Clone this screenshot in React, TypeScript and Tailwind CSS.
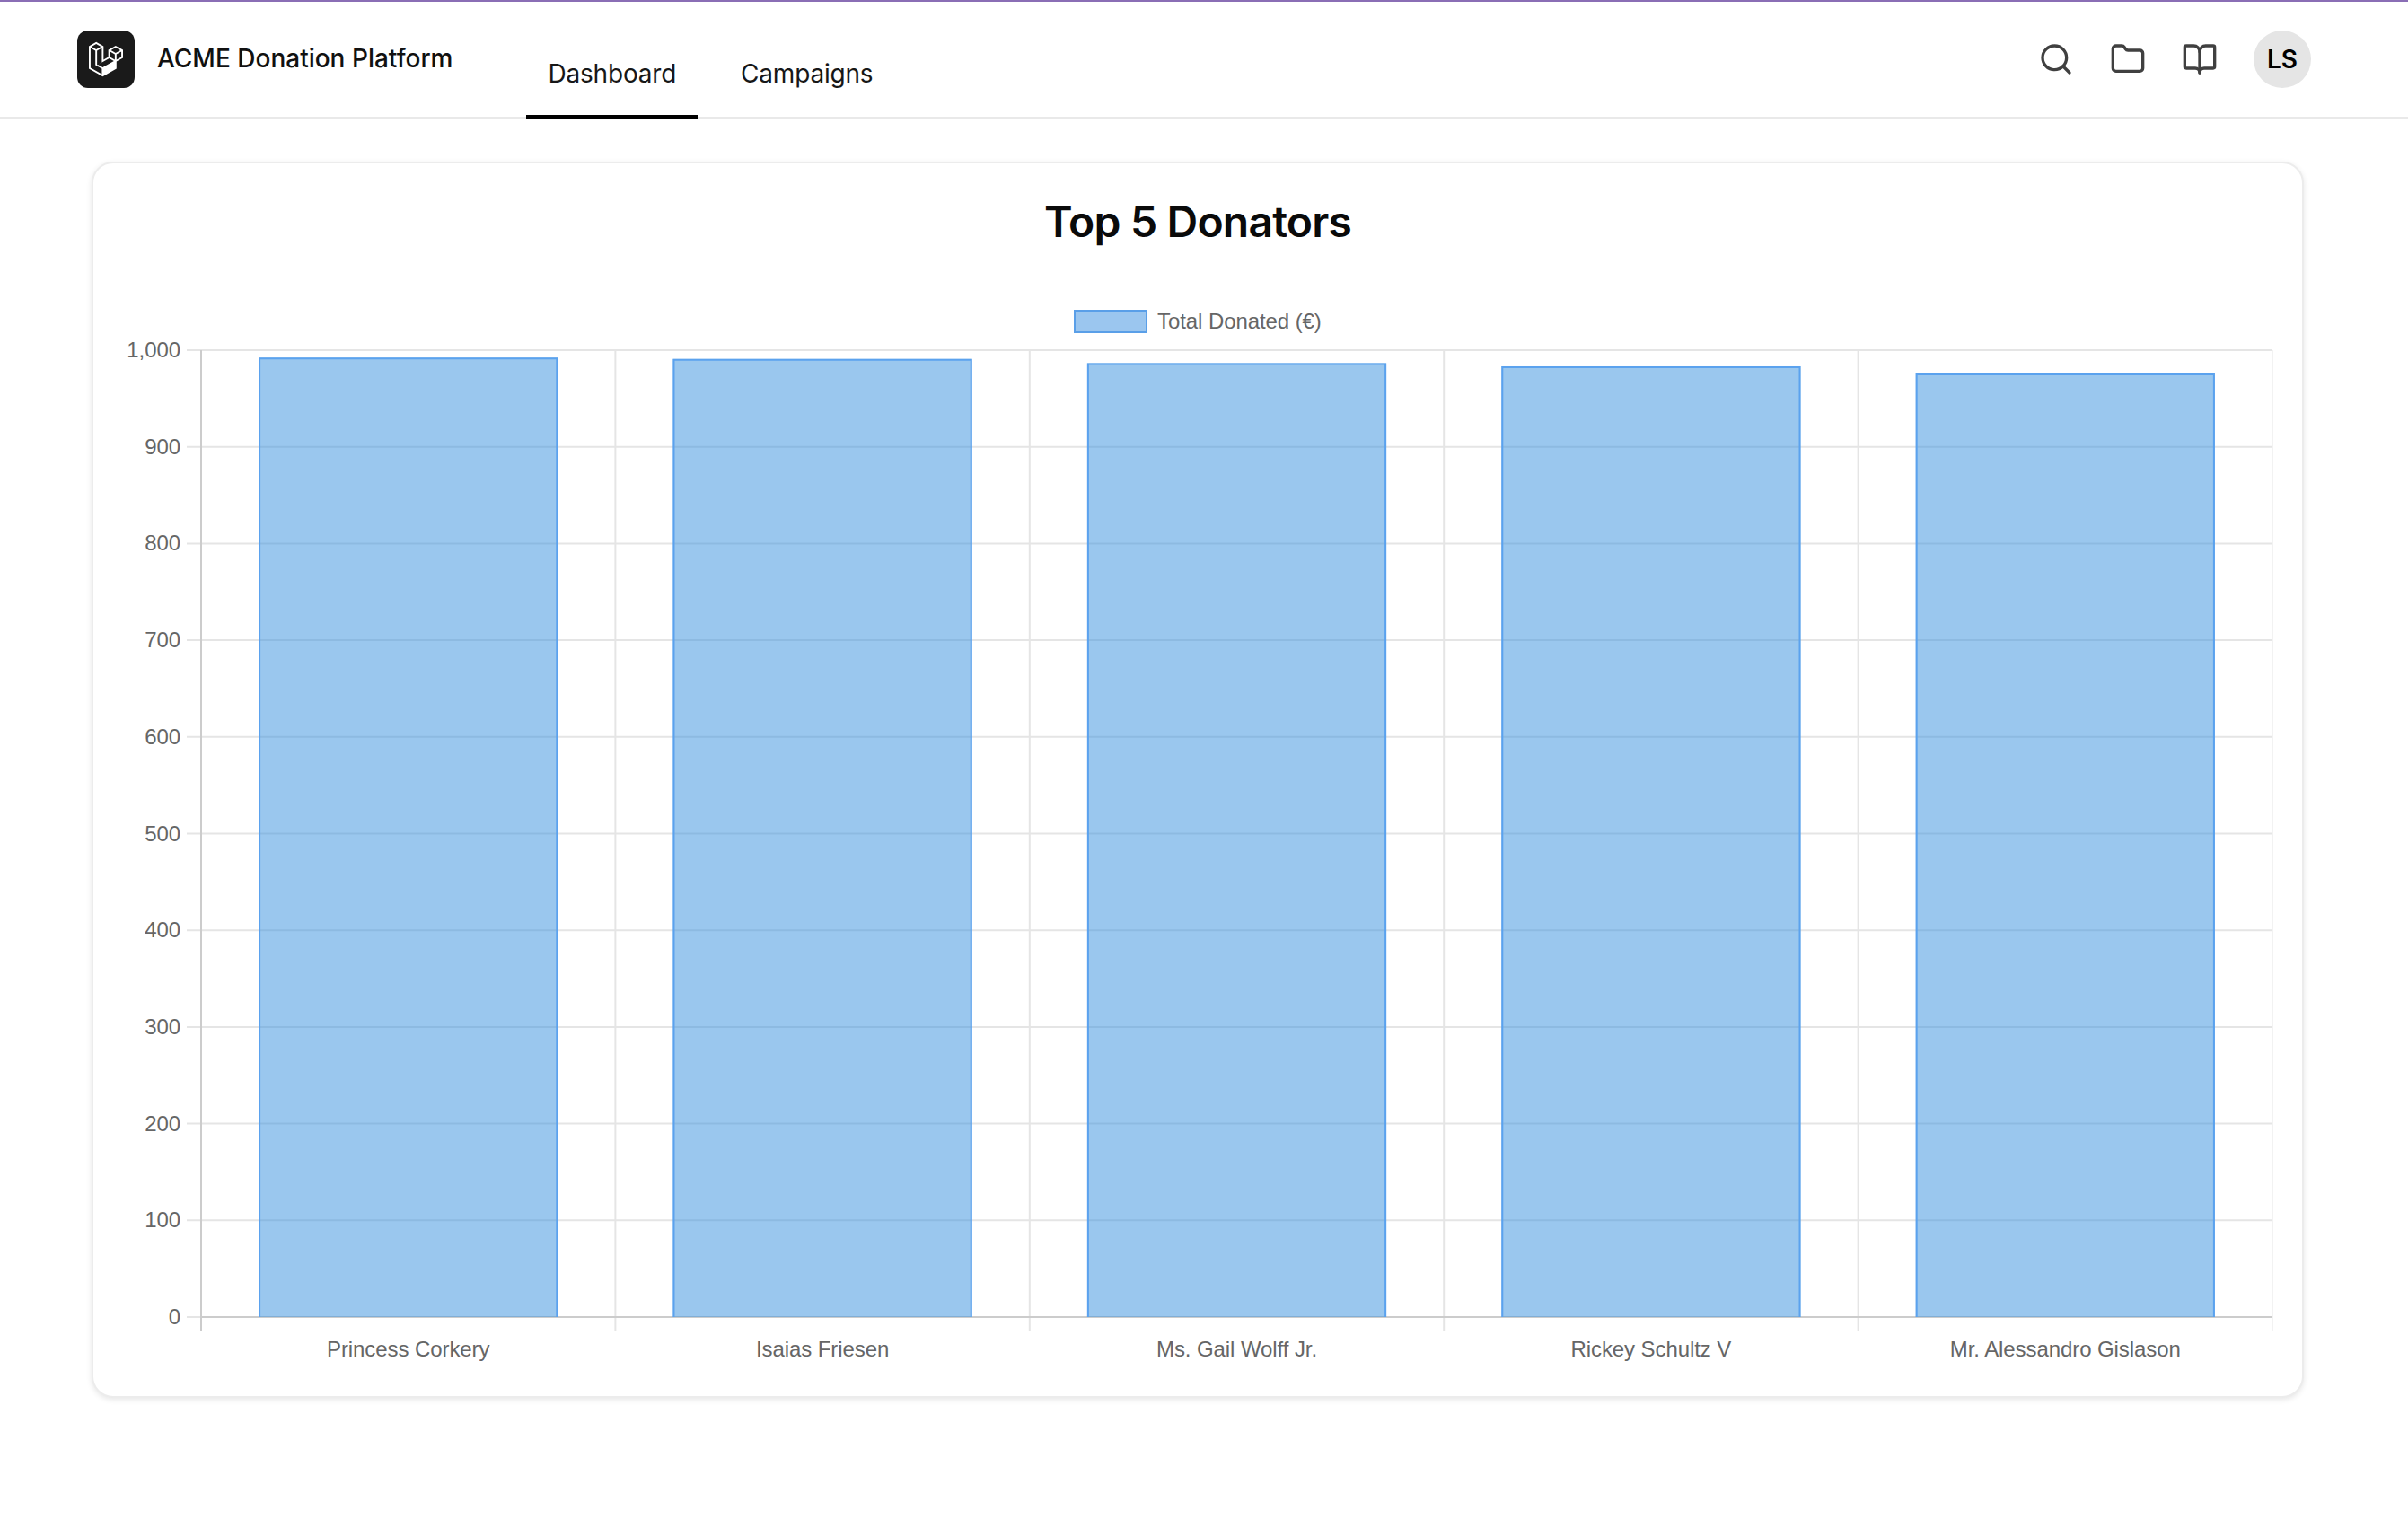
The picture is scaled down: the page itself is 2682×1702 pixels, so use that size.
import { Search, Folder, BookOpen } from 'lucide-react'

const donators = [
  { name: 'Princess Corkery', total: 992.3 },
  { name: 'Isaias Friesen', total: 990.9 },
  { name: 'Ms. Gail Wolff Jr.', total: 986.6 },
  { name: 'Rickey Schultz V', total: 983.3 },
  { name: 'Mr. Alessandro Gislason', total: 975.9 },
]

// chart geometry, in page pixels (the svg viewBox starts at the card's inner corner)
const plotLeft = 224
const plotRight = 2531
const plotTop = 390
const plotBottom = 1467
const colWidth = (plotRight - plotLeft) / donators.length
const barWidth = colWidth * 0.72 + 1
const yTicks = [0, 100, 200, 300, 400, 500, 600, 700, 800, 900, 1000]

const yFor = (value: number) => plotBottom - (value / 1000) * (plotBottom - plotTop)

function LaravelMark() {
  return (
    <svg viewBox="0 0 40 42" className="h-10 w-[38px] text-white" fill="currentColor">
      <path
        fillRule="evenodd"
        clipRule="evenodd"
        d="M17.2 5.633 8.6.855 0 5.633v26.51l16.2 9 16.2-9v-8.442l7.6-4.223V9.856l-8.6-4.777-8.6 4.777V18.3l-5.6 3.111V5.633ZM38 18.301l-5.6 3.11v-6.157l5.6-3.11V18.3Zm-1.06-7.856-5.54 3.078-5.54-3.079 5.54-3.078 5.54 3.079ZM24.8 18.3v-6.157l5.6 3.111v6.158L24.8 18.3Zm-1 1.732 5.54 3.078-13.14 7.302-5.54-3.078 13.14-7.3v-.002Zm-16.2 7.89 7.6 4.222V38.3L2 30.966V7.92l5.6 3.111v16.892ZM8.6 9.3 3.06 6.222 8.6 3.143l5.54 3.08L8.6 9.3Zm1 16.892V11.034l5.6-3.11v16.892l-5.6 3.11v.265Z"
      />
    </svg>
  )
}

function BarChart() {
  return (
    <svg
      viewBox="104 320 2460 1210"
      className="block h-[1210px] w-[2460px] font-['Liberation_Sans',sans-serif] tracking-[-0.08px]"
    >
      {/* legend */}
      <rect x="1197" y="346" width="80" height="24" fill="#9bc6ef" stroke="#5a9fe8" strokeWidth="2" />
      <text x="1289" y="366" fontSize="24" fill="#666666">
        Total Donated (€)
      </text>

      {/* horizontal grid */}
      {yTicks.map((tick) => (
        <g key={tick}>
          <line x1="208" x2={plotRight} y1={yFor(tick)} y2={yFor(tick)} stroke="#e5e5e5" strokeWidth="2" />
          <text x="201" y={yFor(tick) + 8} fontSize="24" fill="#666666" textAnchor="end">
            {tick.toLocaleString('en-US')}
          </text>
        </g>
      ))}

      {/* vertical grid */}
      {donators.map((_, i) => (
        <line
          key={i}
          x1={plotLeft + colWidth * (i + 1)}
          x2={plotLeft + colWidth * (i + 1)}
          y1={plotTop}
          y2="1483"
          stroke="#e5e5e5"
          strokeWidth={i === donators.length - 1 ? 1 : 2}
        />
      ))}
      <line x1={plotLeft} x2={plotLeft} y1={plotTop} y2="1483" stroke="#cccccc" strokeWidth="2" />
      <line x1={plotLeft} x2={plotRight} y1={plotBottom} y2={plotBottom} stroke="#cccccc" strokeWidth="2" />

      {/* bars */}
      {donators.map((d, i) => {
        const center = plotLeft + colWidth * (i + 0.5)
        const top = yFor(d.total)
        const left = center - barWidth / 2
        const right = center + barWidth / 2
        return (
          <g key={d.name}>
            <rect x={left} y={top} width={barWidth} height={plotBottom - top} fill="rgb(54,144,222)" fillOpacity="0.5" />
            {/* border sits inside the bar, no bottom edge */}
            <path
              d={`M${left + 1} ${plotBottom} V${top + 1} H${right - 1} V${plotBottom}`}
              fill="none"
              stroke="#5ba2ee"
              strokeWidth="2"
            />
            <text x={center} y="1511" fontSize="24" fill="#666666" textAnchor="middle">
              {d.name}
            </text>
          </g>
        )
      })}
    </svg>
  )
}

export default function App() {
  return (
    <div className="min-h-screen bg-white font-['Inter',sans-serif] text-black">
      <header className="flex h-[132px] items-center border-t-2 border-b-2 border-t-[#8a6eb5] border-b-[#e9e9e9] pl-[86px] pr-[108px]">
        <div className="flex h-16 w-16 items-center justify-center rounded-[12px] bg-[#1a1a1a]">
          <LaravelMark />
        </div>
        <span className="mb-[2px] ml-[25px] text-[28px] font-medium text-[#111111]">ACME Donation Platform</span>
        <nav className="-mb-[2px] ml-[82px] flex h-[130px] items-end gap-6 self-end">
          <a className="flex h-full items-center border-b-4 border-black px-6 pt-[34px] text-[28px] tracking-[-0.2px] text-[#171717]">
            Dashboard
          </a>
          <a className="flex h-full items-center border-b-4 border-transparent px-6 pt-[34px] text-[28px] tracking-[-0.2px] text-[#171717]">
            Campaigns
          </a>
        </nav>
        <div className="ml-auto flex items-center text-[#404040]">
          <div className="flex w-20 justify-center">
            <Search size={40} />
          </div>
          <div className="flex w-20 justify-center">
            <Folder size={40} />
          </div>
          <div className="flex w-20 justify-center">
            <BookOpen size={40} />
          </div>
          <div className="ml-5 flex h-16 w-16 items-center justify-center rounded-full bg-[#e5e5e5] text-[28px] font-semibold text-black">
            LS
          </div>
        </div>
      </header>

      <main className="pl-[102px] pt-12">
        <div className="h-[1377px] w-[2464px] rounded-3xl border-2 border-[#ececec] bg-white shadow-[0_2px_6px_rgba(0,0,0,0.1)]">
          <h1 className="flex h-[138px] items-center justify-center pb-2 text-center text-[48px] font-semibold tracking-[-0.8px] text-[#0a0a0a]">
            Top 5 Donators
          </h1>
          <BarChart />
        </div>
      </main>
    </div>
  )
}
